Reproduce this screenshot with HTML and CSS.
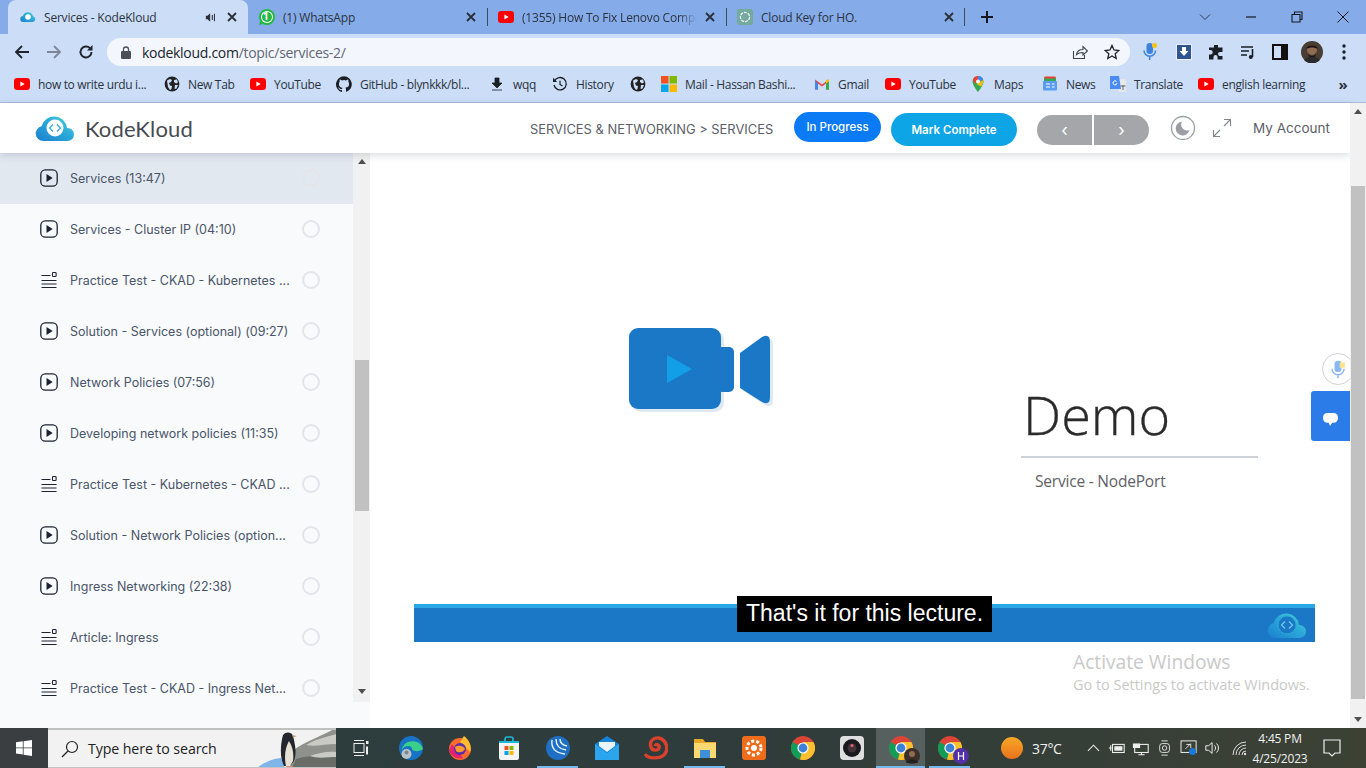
FILE: index.html
```html
<!DOCTYPE html>
<html lang="en">
<head>
<meta charset="utf-8">
<title>Services - KodeKloud</title>
<link rel="stylesheet" href="styles.css">
</head>
<body>
<svg class="defs" width="0" height="0">
  <defs>
    <linearGradient id="cloudG" x1="0" y1="1" x2="1" y2="0"><stop offset="0" stop-color="#1c7fd0"/><stop offset="0.55" stop-color="#2aa9d8"/><stop offset="1" stop-color="#4fd6d6"/></linearGradient>
    <symbol id="yt" viewBox="0 0 16 16"><rect x="0" y="2" width="16" height="12" rx="3.2" fill="#f00"/><path d="M6.4 5.4l4.2 2.6-4.2 2.6z" fill="#fff"/></symbol>
    <symbol id="globe" viewBox="0 0 16 16"><circle cx="8" cy="8" r="7.4" fill="#222"/><path d="M3 4.5l3-1.5 2 1-1 2-2 1 1 2.5 2 .5-.5 3-1.5 1-2-3zM10 4l3-.5 1 3-2 1-2-1.500zM11 9h3l-1.500 3.500-2 .5z" fill="#cbddf7"/></symbol>
    <symbol id="x" viewBox="0 0 12 12"><path d="M2 2l8 8M10 2l-8 8" stroke="#2a2f38" stroke-width="1.800" fill="none"/></symbol>
    <symbol id="play" viewBox="0 0 18 18"><rect x=".8" y=".8" width="16.400" height="16.400" rx="4.500" fill="none" stroke="#1a2233" stroke-width="1.300"/><path d="M6.500 5l6.200 4-6.200 4z" fill="#1a2233"/></symbol>
    <symbol id="quiz" viewBox="0 0 18 18"><path d="M1.500 4.500h9M1.500 9.500h15M1.500 13h15M1.500 16.500h15" stroke="#1a2233" stroke-width="1.100" fill="none"/><rect x="12.500" y="1.500" width="3.600" height="4" rx=".8" fill="none" stroke="#1a2233" stroke-width="1.100"/></symbol>
    <symbol id="chrome" viewBox="0 0 24 24"><circle cx="12" cy="12" r="12" fill="#db4437"/><path d="M12 12L1.600 6A12 12 0 0 0 9 23.600z" fill="#0f9d58"/><path d="M12 12l-3 11.600A12 12 0 0 0 22.400 6H12z" fill="#fbc02d"/><circle cx="12" cy="12" r="5.600" fill="#fff"/><circle cx="12" cy="12" r="4.400" fill="#3b82d6"/></symbol>
  </defs>
</svg>

<header class="tabstrip">
  <div class="tab tab-active">
    <svg class="favicon" viewBox="0 0 16 16"><path d="M3.500 13a3 3 0 0 1-.5-6 5.200 5.200 0 0 1 10 .2A3 3 0 0 1 13 13z" fill="url(#cloudG)"/><circle cx="8" cy="8" r="2.800" fill="#fff"/></svg>
    <span class="tab-title">Services - KodeKloud</span>
    <svg class="audio" viewBox="0 0 14 12"><path d="M1 4h2l3-3v10L3 8H1z" fill="#2a2f38"/><path d="M8.500 3v6M11 1.500v9" stroke="#2a2f38" stroke-width="1.200"/></svg>
    <svg class="close"><use href="#x"/></svg>
  </div>
  <div class="tab">
    <svg class="favicon" viewBox="0 0 16 16"><path d="M8 0a8 8 0 0 0-6.800 12.200L0 16l4-1.100A8 8 0 1 0 8 0z" fill="#25b847"/><circle cx="8" cy="8" r="6" fill="#fff"/><circle cx="8" cy="8" r="5" fill="#25b847"/></svg>
    <span class="wa-one">1</span>
    <span class="tab-title">(1) WhatsApp</span>
    <svg class="close"><use href="#x"/></svg>
  </div>
  <div class="tab">
    <svg class="favicon"><use href="#yt"/></svg>
    <span class="tab-title tab-fade">(1355) How To Fix Lenovo Compu</span>
    <svg class="close"><use href="#x"/></svg>
  </div>
  <div class="tab tab-last">
    <svg class="favicon" viewBox="0 0 16 16"><rect width="16" height="16" rx="2.500" fill="#74aa9c"/><circle cx="8" cy="8" r="4.600" fill="none" stroke="#eef" stroke-width="1.300" stroke-dasharray="3 1"/></svg>
    <span class="tab-title">Cloud Key for HO.</span>
    <svg class="close"><use href="#x"/></svg>
  </div>
  <svg class="newtab" viewBox="0 0 14 14"><path d="M7 1v12M1 7h12" stroke="#15191f" stroke-width="2"/></svg>
  <div class="winctl">
    <svg viewBox="0 0 12 12"><path d="M1 3.500l5 5 5-5" fill="none" stroke="#333c4c" stroke-width="1"/></svg>
    <svg viewBox="0 0 12 12"><path d="M1 6h10" stroke="#15191f" stroke-width="1.200"/></svg>
    <svg viewBox="0 0 12 12"><path d="M3.500 3V1h7.500v7.500H9M1 3.500h8V11H1z" fill="none" stroke="#15191f" stroke-width="1.100"/></svg>
    <svg viewBox="0 0 12 12"><path d="M.5.500l11 11M11.500.500l-11 11" stroke="#15191f" stroke-width="1"/></svg>
  </div>
</header>

<div class="toolbar">
  <div class="nav-btns">
    <svg viewBox="0 0 16 16"><path d="M15 8H2M8 2L2 8l6 6" fill="none" stroke="#20242c" stroke-width="1.800"/></svg>
    <svg viewBox="0 0 16 16"><path d="M1 8h13M8 2l6 6-6 6" fill="none" stroke="#7f8794" stroke-width="1.800"/></svg>
    <svg viewBox="0 0 16 16"><path d="M13.500 8a5.500 5.500 0 1 1-1.600-3.900" fill="none" stroke="#20242c" stroke-width="1.900"/><path d="M14.500 1v5.500H9z" fill="#20242c"/></svg>
  </div>
  <div class="omnibox">
    <svg class="lock" viewBox="0 0 10 13"><path d="M2.500 5.500V3.500a2.500 2.500 0 0 1 5 0v2" fill="none" stroke="#4a4f58" stroke-width="1.300"/><rect y="5" width="10" height="8" rx="1.200" fill="#4a4f58"/></svg>
    <span class="url"><b>kodekloud.com</b>/topic/services-2/</span>
    <svg class="omni-ic" viewBox="0 0 16 16"><path d="M1.500 7v7.500h11V11" fill="none" stroke="#3c4350" stroke-width="1.100"/><path d="M4.500 10.500c.5-3.500 3-5 6.500-5V2.500L15.500 7 11 11V8.500c-2.500 0-4.800.4-6.500 2z" fill="none" stroke="#3c4350" stroke-width="1.100"/></svg>
    <svg class="omni-ic" viewBox="0 0 16 16"><path d="M8 1.500l2 4.500 4.800.5-3.600 3.200 1 4.800L8 12l-4.200 2.500 1-4.800L1.200 6.500 6 6z" fill="none" stroke="#20242c" stroke-width="1.300"/></svg>
  </div>
  <div class="ext-icons">
    <svg class="ext-mic" viewBox="0 0 16 20"><rect x="4.500" y="1" width="6.500" height="11" rx="3.200" fill="#3b82e0"/><rect x="10" y="1" width="5" height="5" rx="2" fill="#f5c518"/><path d="M2 8.500a5.700 5.700 0 0 0 11.500 0M7.700 14v4" fill="none" stroke="#3b82e0" stroke-width="1.500"/></svg>
    <svg viewBox="0 0 16 16"><rect x=".5" y=".5" width="15" height="15" fill="#2e5590" stroke="#eef" stroke-width="1"/><path d="M6 3h4v4h2.500L8 12 3.500 7H6z" fill="#fff"/></svg>
    <svg viewBox="0 0 16 16"><path d="M6 1h4v2.500h4.500V8H12a2 2 0 0 0 0 4h2.500v3.500h-5V13a2 2 0 0 0-4 0v2.500H1v-5h1.500a2.200 2.200 0 0 0 0-4.400H1V3.500h5z" fill="#1a1e25"/></svg>
    <svg viewBox="0 0 16 16"><path d="M1 3h12M1 7h8M1 11h6" stroke="#1a1e25" stroke-width="1.400"/><path d="M12.500 5v8" stroke="#1a1e25" stroke-width="1.600"/><circle cx="10.800" cy="13" r="2" fill="#1a1e25"/></svg>
    <svg viewBox="0 0 16 16"><rect x="1" y="1" width="14" height="14" fill="none" stroke="#111" stroke-width="2"/><rect x="9" y="1" width="6" height="14" fill="#111"/></svg>
    <svg class="avatar" viewBox="0 0 22 22"><circle cx="11" cy="11" r="11" fill="#4a3d33"/><circle cx="11" cy="9" r="5" fill="#8f6b52"/><path d="M5.500 8c0-5 11-5 11 0-3-2-8-2-11 0z" fill="#1c1512"/><path d="M7 12c1 4 7 4 8 0l-1 4.500H8z" fill="#1c1512"/><path d="M3 19c2-4 14-4 16 0a11 11 0 0 1-16 0z" fill="#2c2a2a"/></svg>
    <svg class="ext-dots" viewBox="0 0 4 16"><circle cx="2" cy="2" r="1.700" fill="#1a1e25"/><circle cx="2" cy="8" r="1.700" fill="#1a1e25"/><circle cx="2" cy="14" r="1.700" fill="#1a1e25"/></svg>
  </div>
</div>

<nav class="bookmarks">
  <a class="bm"><svg><use href="#yt"/></svg><span>how to write urdu i...</span></a>
  <a class="bm"><svg><use href="#globe"/></svg><span>New Tab</span></a>
  <a class="bm"><svg><use href="#yt"/></svg><span>YouTube</span></a>
  <a class="bm"><svg viewBox="0 0 16 16"><path d="M8 .3a8 8 0 0 0-2.500 15.600c.4.100.5-.2.500-.4v-1.400c-2.200.5-2.700-1-2.700-1-.4-.9-.9-1.200-.9-1.200-.7-.5.100-.5.100-.5.800.1 1.200.8 1.200.8.700 1.200 1.900.9 2.300.7.100-.5.300-.9.500-1.100-1.800-.2-3.600-.9-3.600-4 0-.9.300-1.600.8-2.100-.1-.2-.4-1 .1-2.100 0 0 .7-.2 2.200.8a7.500 7.500 0 0 1 4 0c1.500-1 2.200-.8 2.200-.8.400 1.100.2 1.900.1 2.100.5.600.8 1.300.8 2.100 0 3.100-1.900 3.700-3.700 3.900.3.300.6.800.6 1.500v2.200c0 .2.100.5.600.4A8 8 0 0 0 8 .3z" fill="#1a1e25"/></svg><span>GitHub - blynkkk/bl...</span></a>
  <a class="bm"><svg viewBox="0 0 16 16"><path d="M6 2h4v5h3l-5 5-5-5h3zM3 14h10" fill="#1a1e25" stroke="#1a1e25" stroke-width=".8"/></svg><span>wqq</span></a>
  <a class="bm"><svg viewBox="0 0 16 16"><path d="M2.500 5A6.200 6.200 0 1 1 2 9" fill="none" stroke="#1a1e25" stroke-width="1.300"/><path d="M1 1.800V6h4.200z" fill="#1a1e25"/><path d="M8 4.800V8.500l2.500 1.500" fill="none" stroke="#1a1e25" stroke-width="1.200"/></svg><span>History</span></a>
  <a class="bm"><svg><use href="#globe"/></svg></a>
  <a class="bm"><svg viewBox="0 0 16 16"><rect width="7.500" height="7.500" fill="#f25022"/><rect x="8.500" width="7.500" height="7.500" fill="#7fba00"/><rect y="8.500" width="7.500" height="7.500" fill="#00a4ef"/><rect x="8.500" y="8.500" width="7.500" height="7.500" fill="#ffb900"/></svg><span>Mail - Hassan Bashi...</span></a>
  <a class="bm"><svg viewBox="0 0 16 16"><path d="M1 13.500V3.500l7 5 7-5v10h-3V7.500L8 10.500 4 7.500v6z" fill="#ea4335"/><path d="M1 13.500h3v-6L1 4z" fill="#4285f4"/><path d="M15 13.500h-3v-6L15 4z" fill="#34a853"/><path d="M12 4l3-.5v2L12 7.500z" fill="#fbbc04"/></svg><span>Gmail</span></a>
  <a class="bm"><svg><use href="#yt"/></svg><span>YouTube</span></a>
  <a class="bm"><svg viewBox="0 0 16 16"><path d="M8 0a5.500 5.500 0 0 0-5.500 5.500C2.500 9.500 8 16 8 16s5.500-6.500 5.500-10.500A5.500 5.500 0 0 0 8 0z" fill="#34a853"/><path d="M3 3.500A5.500 5.500 0 0 1 8 0v3.500L4.500 8z" fill="#ea4335"/><path d="M8 0a5.500 5.500 0 0 1 5 3L8 7z" fill="#4285f4"/><path d="M13.300 4c.4 2-1 4.500-2.300 6.500L6.500 8z" fill="#fbbc04"/><circle cx="8" cy="5.500" r="2" fill="#fff"/></svg><span>Maps</span></a>
  <a class="bm"><svg viewBox="0 0 16 16"><rect x="2" y="1.500" width="12" height="4" fill="#34a853"/><rect x="2.500" y=".5" width="11" height="2" fill="#ea4335"/><rect x="1" y="5" width="14" height="9.500" rx="1" fill="#5b9bf0"/><path d="M4 8h4M4 11h4M10 8h2.500M10 11h2.500" stroke="#fff" stroke-width="1.200"/></svg><span>News</span></a>
  <a class="bm"><svg viewBox="0 0 16 16"><path d="M7 3h9v13H9z" fill="#e8e8e8"/><path d="M0 0h9l2 13H0z" fill="#4a8af4"/><path d="M7 7.200a2 2 0 1 1-.5-1.700" fill="none" stroke="#fff" stroke-width="1"/><path d="M10.500 10h5M13 9v5" stroke="#666" stroke-width="1"/></svg><span>Translate</span></a>
  <a class="bm"><svg><use href="#yt"/></svg><span>english learning</span></a>
  <a class="bm bm-more">»</a>
</nav>

<div class="app">
  <div class="app-col">
    <header class="site-head">
      <svg class="logo" viewBox="0 0 40 26"><path d="M8 26a7.500 7.500 0 0 1-1.500-14.800 13 13 0 0 1 25.500 1.800A6.500 6.500 0 0 1 33 26z" fill="url(#cloudG)"/><circle cx="20" cy="13" r="8.500" fill="#fff"/><path d="M18 9.500L14.500 13l3.500 3.500M22 9.500l3.500 3.500-3.500 3.500" fill="none" stroke="#2aa3dd" stroke-width="1.100"/></svg>
      <span class="brand">KodeKloud</span>
      <span class="crumb">SERVICES &amp; NETWORKING &gt; SERVICES</span>
      <button class="btn btn-progress">In Progress</button>
      <button class="btn btn-complete">Mark Complete</button>
      <div class="pager"><span>‹</span><span>›</span></div>
      <svg class="moon" viewBox="0 0 26 26"><circle cx="13" cy="13" r="11.500" fill="none" stroke="#9b9ea3" stroke-width="1.300"/><path d="M12 6.500a7 7 0 1 0 7.500 8.500 6 6 0 0 1-7.500-8.500z" fill="#9b9ea3"/></svg>
      <svg class="expand" viewBox="0 0 20 20"><path d="M12 1.500h6.500V8M18.500 1.500l-6.500 6.500M8 18.500H1.500V12M1.500 18.500L8 12" fill="none" stroke="#80858c" stroke-width="1.100"/></svg>
      <a class="account">My Account</a>
    </header>
    <div class="content">
      <aside class="sidebar">
        <ul class="lessons">
          <li class="lesson current"><svg class="lic"><use href="#play"/></svg><span class="lname">Services (13:47)</span><i class="radio"></i></li>
          <li class="lesson"><svg class="lic"><use href="#play"/></svg><span class="lname">Services - Cluster IP (04:10)</span><i class="radio"></i></li>
          <li class="lesson"><svg class="lic"><use href="#quiz"/></svg><span class="lname">Practice Test - CKAD - Kubernetes ...</span><i class="radio"></i></li>
          <li class="lesson"><svg class="lic"><use href="#play"/></svg><span class="lname">Solution - Services (optional) (09:27)</span><i class="radio"></i></li>
          <li class="lesson"><svg class="lic"><use href="#play"/></svg><span class="lname">Network Policies (07:56)</span><i class="radio"></i></li>
          <li class="lesson"><svg class="lic"><use href="#play"/></svg><span class="lname">Developing network policies (11:35)</span><i class="radio"></i></li>
          <li class="lesson"><svg class="lic"><use href="#quiz"/></svg><span class="lname">Practice Test - Kubernetes - CKAD ...</span><i class="radio"></i></li>
          <li class="lesson"><svg class="lic"><use href="#play"/></svg><span class="lname">Solution - Network Policies (option...</span><i class="radio"></i></li>
          <li class="lesson"><svg class="lic"><use href="#play"/></svg><span class="lname">Ingress Networking (22:38)</span><i class="radio"></i></li>
          <li class="lesson"><svg class="lic"><use href="#quiz"/></svg><span class="lname">Article: Ingress</span><i class="radio"></i></li>
          <li class="lesson"><svg class="lic"><use href="#quiz"/></svg><span class="lname">Practice Test - CKAD - Ingress Net...</span><i class="radio"></i></li>
        </ul>
        <div class="side-scroll"><i class="arrow-up"></i><i class="side-thumb"></i><i class="arrow-down"></i></div>
      </aside>
      <main class="player">
        <div class="slide-top">
          <svg class="camera" viewBox="0 0 145 86"><g fill="#dfe9f3" transform="translate(3 3)"><rect width="92" height="81" rx="9"/><path d="M111 25L133 9Q141 5 141 14V69Q141 78 133 74L111 60Z"/></g><rect x="88" y="19" width="17" height="45" rx="5" fill="#1a78c6"/><rect width="92" height="81" rx="9" fill="#1a78c6"/><path d="M111 25L133 9Q141 5 141 14V69Q141 78 133 74L111 60Z" fill="#1a78c6"/><path d="M38 27l25 14-25 14z" fill="#129fe8"/></svg>
          <div class="demo">
            <h1 class="demo-title">Demo</h1>
            <hr class="demo-rule">
            <p class="demo-sub">Service - NodePort</p>
          </div>
        </div>
        <div class="band">
          <svg class="band-logo" viewBox="0 0 40 26"><path d="M8 26a7.500 7.500 0 0 1-1.500-14.800 13 13 0 0 1 25.500 1.800A6.500 6.500 0 0 1 33 26z" fill="url(#cloudG)"/><circle cx="20" cy="13" r="9" fill="#1a78c6" stroke="#2aa9d8"/><path d="M18 9.500L14.500 13l3.500 3.500M22 9.500l3.500 3.500-3.500 3.500" fill="none" stroke="#7cc9ee" stroke-width="1.100"/></svg>
        </div>
        <div class="caption">That's it for this lecture.</div>
        <div class="activate"><strong>Activate Windows</strong><span>Go to Settings to activate Windows.</span></div>
        <div class="mic-float"><svg viewBox="0 0 16 22"><rect x="4" y="1" width="8" height="13" rx="4" fill="#8ab6f3"/><rect x="10" y="3" width="6" height="6" fill="#fbe38a"/><path d="M1 10a7 7 0 0 0 14 0M8 17v4" fill="none" stroke="#8ab6f3" stroke-width="1.700"/></svg></div>
        <div class="chat-float"><svg viewBox="0 0 16 14"><rect width="16" height="10.500" rx="4.500" fill="#fff"/><path d="M5.500 9.500h5L7.500 14z" fill="#fff"/></svg></div>
      </main>
    </div>
  </div>
  <div class="page-scroll"><i class="arrow-up"></i><i class="page-thumb"></i><i class="arrow-down"></i></div>
</div>

<footer class="taskbar">
  <div class="start"><svg viewBox="0 0 16 16"><path d="M0 2.300l6.800-1v6.200H0zM7.600 1.200L16 0v7.500H7.600zM0 8.300h6.800v6.300l-6.800-1zM7.600 8.300H16V16l-8.400-1.200z" fill="#fff"/></svg></div>
  <div class="search">
    <svg class="search-ic" viewBox="0 0 18 18"><circle cx="11" cy="7" r="5.500" fill="none" stroke="#222" stroke-width="1.200"/><path d="M7 11l-6 6" stroke="#222" stroke-width="1.300"/></svg>
    <span>Type here to search</span>
    <svg class="penguin" viewBox="0 0 84 38"><path d="M5 38c6-5 14-9 24-10l4 10z" fill="#7fb5e8"/><path d="M38 38l5-19C52 12 68 7 84 -2V38z" fill="#8f918c"/><path d="M40 38l4-9c12-4 28-4 40-2v11z" fill="#6a6c68"/><path d="M54 15c8-5 20-8 30-11v10c-10 0-22 3-30 1zM58 26c8-3 18-5 26-4v5c-8 0-18 2-26-1z" fill="#c9cac6"/><path d="M31 5c3-4 9-3 10 1 2 8 4 17 1 25l-4 5h-6c-4-8-4-20-1-31z" fill="#23262d"/><path d="M37 11c4 6 5 14 4 20l-3 5h-4c-2-9-1-18 3-25z" fill="#e6e1d5"/><path d="M40 5l5 1-4 1.500z" fill="#c96"/><path d="M34 36h6l-1 2h-4z" fill="#d98a6a"/></svg>
  </div>
  <svg class="taskview" viewBox="0 0 16 16"><path d="M1 .500h10M1 15.500h10" stroke="#eee" stroke-width="1"/><rect x="1" y="3.500" width="10" height="9" fill="none" stroke="#eee"/><rect x="13" y="1" width="2.500" height="3" fill="#eee"/><path d="M14 6.500v8" stroke="#eee" stroke-width="2"/></svg>
  <div class="apps">
    <span class="app-ic"><svg viewBox="0 0 24 24"><circle cx="12" cy="12" r="12" fill="#1673c5"/><path d="M3 14C3 4 21 1 24 13c-3 3-12 3-11-1-1-3-8-3-10 2z" fill="#3bd08a"/><circle cx="7.500" cy="18" r="5" fill="#b9c3c7"/><circle cx="7.500" cy="16.500" r="2" fill="#7c8488"/></svg></span>
    <span class="app-ic"><svg viewBox="0 0 24 24"><circle cx="12" cy="13" r="11" fill="#ff6b2c"/><path d="M16 0c6 4 8 12 6 16L12 6z" fill="#ffbc2e"/><path d="M1 14c1 6 8 10 14 8L4 8z" fill="#e6246d"/><circle cx="12" cy="13" r="6" fill="#5a2ea6"/><path d="M7 11c3-2 8-2 10 2-2 4-7 4-9 2z" fill="#ff9a2e"/></svg></span>
    <span class="app-ic"><svg viewBox="0 0 24 24"><path d="M2 6h20v16a2 2 0 0 1-2 2H4a2 2 0 0 1-2-2z" fill="#f4f4f4"/><path d="M8 6V3a2 2 0 0 1 2-2h4a2 2 0 0 1 2 2v3" fill="none" stroke="#19b8d6" stroke-width="1.700"/><rect x="2" y="5" width="20" height="2" fill="#19b8d6"/><rect x="7.500" y="10" width="4" height="4" fill="#f25022"/><rect x="12.500" y="10" width="4" height="4" fill="#7fba00"/><rect x="7.500" y="15" width="4" height="4" fill="#00a4ef"/><rect x="12.500" y="15" width="4" height="4" fill="#ffb900"/></svg></span>
    <span class="app-ic running-sm"><svg viewBox="0 0 24 24"><circle cx="12" cy="12" r="12" fill="#1f6fc4"/><path d="M6 4c-1 8 3 13 13 14M10 3c0 7 3 10 10 11M14 3c0 4 2 6 7 7" fill="none" stroke="#e9f3fb" stroke-width="1.400"/></svg></span>
    <span class="app-ic"><svg viewBox="0 0 24 24"><path d="M0 8l12-8 12 8v16H0z" fill="#1683d8"/><path d="M0 8l12 9 12-9v16H0z" fill="#2aa5ee"/><path d="M4 6h16v4l-8 6-8-6z" fill="#e8f3fc"/></svg></span>
    <span class="app-ic"><svg viewBox="0 0 24 24"><path d="M1 18c3 5 14 5 19 1 5-5 3-15-5-17-6-1-10 4-8 9 1 4 7 4 8 1 1-3-3-5-4-2" fill="none" stroke="#d8412d" stroke-width="3.400"/></svg></span>
    <span class="app-ic running-lg"><svg viewBox="0 0 24 24"><path d="M1 3h9l2 3h11v3H1z" fill="#e6a825"/><rect x="1" y="7" width="22" height="15" fill="#fbd872"/><rect x="7" y="14" width="10" height="8" fill="#3d8fd6"/></svg></span>
    <span class="app-ic"><svg viewBox="0 0 24 24"><rect width="24" height="24" rx="3" fill="#ee6c1a"/><circle cx="12" cy="12" r="7" fill="none" stroke="#fff" stroke-width="3" stroke-dasharray="3 2"/><circle cx="12" cy="12" r="3" fill="#fff"/></svg></span>
    <span class="app-ic"><svg><use href="#chrome"/></svg></span>
    <span class="app-ic"><svg viewBox="0 0 24 24"><rect width="24" height="24" rx="4" fill="#dfdfdf"/><circle cx="12" cy="12" r="9" fill="#1a1a1e"/><circle cx="12" cy="12" r="4.500" fill="#45313a"/><circle cx="12" cy="9.500" r="1.500" fill="#e06a6a"/></svg></span>
    <span class="app-ic running-active"><svg><use href="#chrome"/></svg><svg class="badge" viewBox="0 0 16 16"><circle cx="8" cy="8" r="8" fill="#3b2f2a"/><circle cx="8" cy="6" r="3" fill="#8f6b52"/><path d="M2 15c1-5 11-5 12 0z" fill="#222"/></svg></span>
    <span class="app-ic running-md"><svg><use href="#chrome"/></svg><svg class="badge" viewBox="0 0 16 16"><circle cx="8" cy="8" r="8" fill="#5130a8"/><path d="M5.500 4v8M10.500 4v8M5.500 8h5" stroke="#fff" stroke-width="1.200"/></svg></span>
  </div>
  <div class="tray">
    <span class="sun"></span>
    <span class="temp">37°C</span>
    <svg class="chev" viewBox="0 0 14 8"><path d="M1 7l6-6 6 6" fill="none" stroke="#eee" stroke-width="1.100"/></svg>
    <svg class="ti" viewBox="0 0 20 16"><path d="M1 8h3M3 5v6" stroke="#eee" stroke-width="1.200"/><rect x="5" y="4" width="13" height="9" fill="none" stroke="#eee" stroke-width="1.200"/><rect x="7" y="6" width="9" height="5" fill="#eee"/></svg>
    <svg class="ti" viewBox="0 0 20 16"><rect x="3" y="4" width="15" height="9" fill="none" stroke="#eee" stroke-width="1.200"/><rect x="1" y="3" width="8" height="5" fill="#eee"/><path d="M10.500 13v3M7 15.500h7" stroke="#eee" stroke-width="1.200"/></svg>
    <svg class="ti" viewBox="0 0 20 18"><rect x="4" y="4" width="11" height="10" rx="3" fill="none" stroke="#eee"/><circle cx="9.500" cy="9" r="2.500" fill="none" stroke="#eee"/><path d="M6 1h7M6 17h7" stroke="#eee"/></svg>
    <svg class="ti" viewBox="0 0 20 18"><rect x="1" y="1" width="17" height="13" fill="none" stroke="#eee" stroke-width="1.100"/><path d="M6 10l6-6M7 5h5v4" fill="none" stroke="#eee"/><circle cx="14" cy="13" r="4" fill="#1a78d6"/></svg>
    <svg class="ti" viewBox="0 0 20 16"><path d="M2 5.500h3L9 2v12l-4-3.500H2z" fill="none" stroke="#eee" stroke-width="1.100"/><path d="M11.500 5a4 4 0 0 1 0 6M14 3a7 7 0 0 1 0 10" fill="none" stroke="#eee" stroke-width="1.100"/></svg>
    <svg class="ti ti-wifi" viewBox="0 0 18 16"><path d="M2 15A13 13 0 0 1 15 2M5 15A10 10 0 0 1 15 5M8 15a7 7 0 0 1 7-7M11 15a4 4 0 0 1 4-4" fill="none" stroke="#ddd" stroke-width="1"/><circle cx="14" cy="14" r="1.200" fill="#ddd"/></svg>
    <div class="clock"><span>4:45 PM</span><span>4/25/2023</span></div>
    <svg class="notif" viewBox="0 0 18 18"><path d="M1 1h16v13h-5l-3 3-3-3H1z" fill="none" stroke="#eee" stroke-width="1.200"/></svg>
  </div>
</footer>
</body>
</html>
```

FILE: styles.css
```css
* { box-sizing: border-box; }
html, body { margin: 0; height: 100%; }
body {
  width: 1366px;
  height: 768px;
  overflow: hidden;
  display: flex;
  flex-direction: column;
  font-family: "Open Sans", "Liberation Sans", sans-serif;
  background: #fff;
}
.defs { position: absolute; }
svg { display: block; flex: none; }

/* tab strip */
.tabstrip {
  height: 34px;
  background: #85abe9;
  display: flex;
  align-items: stretch;
  padding-left: 8px;
  flex: none;
}
.tab {
  width: 239px;
  display: flex;
  align-items: center;
  padding: 0 10px 0 11px;
  position: relative;
  color: #2c3340;
  font-size: 12px;
  letter-spacing: -0.2px;
}
.tab-active { width: 240px; background: #cbddf7; border-radius: 8px 8px 0 0; padding-left: 12px; }
.tab + .tab + .tab::before, .tab-last::after {
  content: "";
  position: absolute;
  left: 0;
  top: 8px;
  height: 18px;
  width: 1px;
  background: #3f4a5e;
}
.tab-last::after { left: auto; right: 0; }
.favicon { width: 16px; height: 16px; margin-right: 8px; }
.wa-one { position: absolute; left: 15px; top: 9px; font-size: 10px; font-weight: 700; color: #fff; letter-spacing: 0; }
.tab-title { flex: 1; min-width: 0; white-space: nowrap; }
.tab-fade { -webkit-mask-image: linear-gradient(90deg, #000 86%, transparent 96%); mask-image: linear-gradient(90deg, #000 86%, transparent 96%); }
.audio { width: 12px; height: 11px; margin-right: 9px; }
.close { width: 12px; height: 12px; }
.newtab { width: 14px; height: 14px; align-self: center; margin-left: 15px; }
.winctl { margin-left: auto; display: grid; grid-template-columns: repeat(4, 46px); align-items: center; justify-items: center; width: 184px; }
.winctl svg { width: 12px; height: 12px; }

/* toolbar */
.toolbar {
  height: 34px;
  background: #cbddf7;
  display: flex;
  align-items: center;
  flex: none;
  padding-top: 4px;
  padding-bottom: 2px;
}
.nav-btns { width: 107px; display: grid; grid-template-columns: 32px 32px 32px; padding-left: 6px; justify-items: center; }
.nav-btns svg { width: 16px; height: 16px; }
.omnibox {
  width: 1023px;
  height: 28px;
  background: #f3f7fd;
  border-radius: 14px;
  display: flex;
  align-items: center;
  padding: 0 10px 0 14px;
}
.lock { width: 10px; height: 13px; margin-right: 11px; }
.url { flex: 1; font-size: 14px; color: #5f6674; letter-spacing: -0.29px; }
.url b { font-weight: 400; color: #20242c; }
.omni-ic { width: 16px; height: 16px; margin-left: 16px; }
.ext-icons { flex: 1; display: grid; grid-template-columns: 40px 28px 36px 27px 38px 26px 38px; align-items: center; justify-items: center; }
.ext-icons svg { width: 16px; height: 16px; }
.ext-icons .ext-mic { height: 20px; }
.ext-icons .ext-dots { width: 4px; }
.ext-icons .avatar { width: 22px; height: 22px; }

/* bookmarks */
.bookmarks {
  height: 35px;
  background: #cbddf7;
  border-bottom: 1px solid #a8bbdb;
  flex: none;
  display: grid;
  grid-template-columns: 150px 86px 86px 153px 63px 78px 31px 153px 71px 85px 72px 68px 88px 131px 40px;
  align-items: center;
  padding-left: 14px;
  font-size: 12px;
  color: #2c3340;
  letter-spacing: -0.33px;
  padding-bottom: 2px;
}
.bm { display: flex; align-items: center; white-space: nowrap; }
.bm svg { width: 16px; height: 16px; margin-right: 8px; }
.bm-more { font-size: 15px; font-weight: 700; justify-content: center; margin-left: -12px; }

/* app */
.app { flex: 1; min-height: 0; display: flex; }
.app-col { width: 1350px; display: flex; flex-direction: column; min-height: 0; }
.site-head {
  height: 50px;
  flex: none;
  background: #fff;
  display: flex;
  align-items: center;
  padding-left: 35px;
  box-shadow: 0 2px 8px rgba(40, 50, 70, .18);
  position: relative;
  z-index: 2;
}
.logo { width: 40px; height: 26px; }
.brand { font-family: "Lato", sans-serif; font-size: 22px; color: #464a50; margin-left: 10px; letter-spacing: 0.13px; width: 445px; }
.crumb { font-family: "Inter", sans-serif; font-size: 12.900px; color: #5b6068; width: 264px; white-space: nowrap; margin-top: 2px; }
.btn { border: 0; color: #fff; font-family: "Inter", sans-serif; font-size: 11.500px; padding: 0; }
.btn-progress { width: 87px; height: 30px; background: #0a7bf5; border-radius: 15px; font-weight: 500; margin-top: -2px; }
.btn-complete { width: 126px; height: 33px; background: #0ea5e6; border-radius: 17px; margin-left: 10px; margin-top: 3px; font-weight: 600; }
.pager { margin-left: 20px; margin-top: 4px; width: 112px; height: 30px; display: grid; grid-template-columns: 55px 55px; gap: 2px; font-family: "Inter", sans-serif; }
.pager span { background: #a4a6aa; color: #fff; display: flex; align-items: center; justify-content: center; font-size: 17px; }
.pager span:first-child { border-radius: 15px 0 0 15px; }
.pager span:last-child { border-radius: 0 15px 15px 0; }
.moon { width: 26px; height: 26px; margin-left: 21px; }
.expand { width: 20px; height: 20px; margin-left: 16px; }
.account { font-family: "Inter", sans-serif; font-size: 13.500px; color: #5b6068; margin-left: 21px; white-space: nowrap; }

.content { flex: 1; min-height: 0; display: flex; }
.sidebar { width: 370px; background: #f8fafc; display: flex; align-items: flex-start; overflow: hidden; }
.lessons { list-style: none; margin: 0; padding: 0; width: 353px; }
.lesson { height: 51px; display: flex; align-items: center; padding-left: 40px; font-family: "Inter", sans-serif; font-size: 12.500px; color: #4a5568; }
.current { background: #e2e8f0; }
.lic { width: 18px; height: 18px; margin-top: -1px; }
.lname { width: 219px; margin-left: 12px; white-space: nowrap; }
.radio { width: 18px; height: 18px; border: 2px solid #e2e5ea; border-radius: 50%; margin-left: 13px; margin-top: -1px; }
.side-scroll { width: 17px; height: 549px; background: #f1f1f1; display: flex; flex-direction: column; align-items: center; padding-top: 6px; }
.arrow-up { width: 0; height: 0; border: 4px solid transparent; border-top: 0; border-bottom: 5px solid #505050; flex: none; }
.arrow-down { width: 0; height: 0; border: 4px solid transparent; border-bottom: 0; border-top: 5px solid #505050; flex: none; }
.side-thumb { width: 14px; height: 151px; background: #c1c1c1; margin-top: 196px; margin-bottom: 178px; flex: none; }

.player { flex: 1; position: relative; padding: 0 35px 0 44px; display: flex; flex-direction: column; background: #fff; }
.slide-top { height: 451px; display: flex; align-items: flex-start; flex: none; }
.camera { width: 145px; height: 86px; margin: 175px 0 0 215px; overflow: visible; }
.demo { margin: 231px 0 0 247px; width: 237px; }
.demo-title { margin: 0 0 0 2px; font-family: "Open Sans", sans-serif; font-weight: 300; font-size: 54px; line-height: 60px; color: #2a2a2a; height: 72px; -webkit-text-stroke: .35px #2a2a2a; }
.demo-rule { margin: 0; border: 0; border-top: 2px solid #cfd2d7; }
.demo-sub { margin: 13px 0 0 14px; font-size: 15.500px; line-height: 20px; color: #5e6166; letter-spacing: -0.2px; }
.band { height: 38px; background: #1a78c6; border-top: 4px solid #2aa7e6; display: flex; justify-content: flex-end; align-items: center; padding-right: 8px; flex: none; }
.band-logo { width: 40px; height: 26px; }
.caption {
  position: absolute;
  left: 367px;
  top: 443px;
  height: 36px;
  padding: 0 9px;
  background: #000;
  color: #fff;
  font-family: "Liberation Sans", Arial, sans-serif;
  font-size: 23px;
  line-height: 34px;
  white-space: nowrap;
}
.activate { position: absolute; left: 703px; top: 496px; display: flex; flex-direction: column; color: #c9c9c9; white-space: nowrap; }
.activate strong { font-weight: 400; font-size: 19.200px; line-height: 26px; }
.activate span { font-size: 14.450px; line-height: 20px; }
.mic-float { position: absolute; right: -4px; top: 200px; width: 32px; height: 32px; border: 1px solid #cfd3d8; border-radius: 50%; background: #fff; display: flex; align-items: center; padding-left: 8px; clip-path: inset(-2px 4px -2px -2px); }
.mic-float svg { width: 14px; height: 19px; }
.chat-float { position: absolute; right: 0; top: 238px; width: 39px; height: 50px; background: #2b7be9; border-radius: 3px 0 0 3px; display: flex; align-items: center; justify-content: center; padding-top: 6px; }
.chat-float svg { width: 15px; height: 13px; }

.page-scroll { width: 16px; background: #f1f1f1; display: flex; flex-direction: column; align-items: center; padding-top: 6px; position: relative; z-index: 3; }
.page-thumb { width: 14px; height: 513px; background: #c1c1c1; margin-top: 72px; margin-bottom: 18px; flex: none; }

/* taskbar */
.taskbar { height: 40px; flex: none; display: flex; align-items: center; background: linear-gradient(90deg, #2c3d3e, #2f3c3b 55%, #3c4134); color: #f0f0f0; }
.start { width: 48px; height: 40px; background: #3b3e40; display: flex; align-items: center; justify-content: center; }
.start svg { width: 16px; height: 16px; }
.search { width: 288px; height: 40px; background: #f2f2f2; border-top: 2px solid #bfc0c0; border-bottom: 1px solid #c4c4c4; display: flex; align-items: center; padding-left: 13px; color: #222; font-size: 14.200px; position: relative; overflow: hidden; letter-spacing: -0.1px; }
.search-ic { width: 18px; height: 18px; margin-right: 9px; }
.search span { white-space: nowrap; }
.search .penguin { position: absolute; right: 0; top: 0; width: 84px; height: 38px; }
.taskview { width: 16px; height: 16px; margin: 0 17px 0 17px; }
.apps { display: grid; grid-template-columns: repeat(12, 49px); height: 40px; }
.app-ic { position: relative; display: flex; align-items: center; justify-content: center; height: 40px; }
.app-ic svg { width: 24px; height: 24px; }
.app-ic .badge { position: absolute; width: 16px; height: 16px; left: 28px; top: 20px; }
.running-active { background: #56605f; }
.running-sm::after, .running-lg::after, .running-active::after, .running-md::after { content: ""; position: absolute; bottom: 0; height: 2px; background: #76b9ed; }
.running-sm::after, .running-lg::after, .running-md::after { left: 4px; right: 4px; }
.running-active::after { left: 0; right: 0; }
.tray { flex: 1; display: flex; align-items: center; height: 40px; }
.sun { width: 22px; height: 22px; border-radius: 50%; background: linear-gradient(180deg, #f8a726, #e8731c); margin-left: 27px; }
.temp { font-size: 14px; margin-left: 9px; width: 38px; letter-spacing: -0.3px; white-space: nowrap; }
.chev { width: 13px; height: 8px; margin-left: 17px; margin-right: 2px; }
.ti { width: 18px; height: 16px; margin-left: 6px; }
.ti-wifi { margin-left: 9px; }
.clock { display: flex; flex-direction: column; align-items: center; width: 62px; font-size: 12px; line-height: 20px; letter-spacing: -0.2px; padding-top: 1px; }
.notif { width: 18px; height: 18px; margin-left: 12px; }
```
